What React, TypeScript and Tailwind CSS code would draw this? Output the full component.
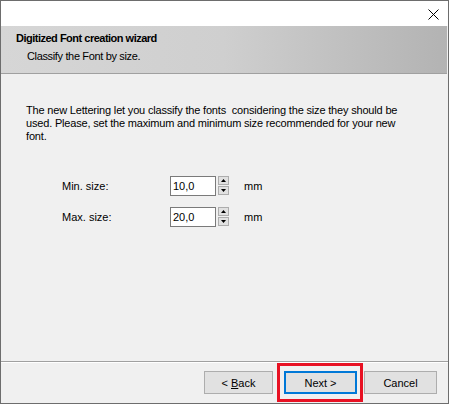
import React from 'react';

function Spinner() {
  return (
    <div className="ml-[2px] flex h-[20px] w-[11px] flex-col gap-[1px]">
      <div className="flex h-[9px] items-center justify-center border border-[#adadad] bg-[#e1e1e1]">
        <svg width="5" height="3" viewBox="0 0 5 3">
          <path d="M2.5 0 L5 3 L0 3 Z" fill="#000" />
        </svg>
      </div>
      <div className="flex h-[9px] items-center justify-center border border-[#adadad] bg-[#e1e1e1]">
        <svg width="5" height="3" viewBox="0 0 5 3">
          <path d="M0 0 L5 0 L2.5 3 Z" fill="#000" />
        </svg>
      </div>
    </div>
  );
}

function SizeRow({ label, value }: { label: string; value: string }) {
  return (
    <div className="flex items-center">
      <span className="w-[108px]">{label}</span>
      <div className="flex h-[20px] w-[46px] items-center border border-[#7a7a7a] bg-white pl-[2px] text-black">
        {value}
      </div>
      <Spinner />
      <span className="ml-[15px]">mm</span>
    </div>
  );
}

export default function App() {
  return (
    <div
      className="flex h-[404px] w-[449px] flex-col border border-[#6d6d6d] bg-[#f0f0f0] text-[11px] leading-[14px] text-black"
      style={{ fontFamily: '"Liberation Sans", Arial, sans-serif' }}
    >
      <div className="flex h-[25px] shrink-0 justify-end bg-white pr-[9px] pt-[8px]">
        <svg width="11" height="11" viewBox="0 0 11 11">
          <path d="M0.5 0.5 L10.5 10.5 M10.5 0.5 L0.5 10.5" stroke="#000" strokeWidth="1" />
        </svg>
      </div>
      <div className="mr-[1px] flex h-[48px] shrink-0 flex-col border-b border-[#a0a0a0] bg-gradient-to-r from-[#d6d6d6] via-[#cfcfcf] to-[#b3b3b3] pl-[15px] pt-[5px]">
        <div className="font-bold tracking-[-0.5px]">Digitized Font creation wizard</div>
        <div className="ml-[11px] mt-[4px] tracking-[-0.35px]">Classify the Font by size.</div>
      </div>
      <div className="flex flex-1 flex-col pl-[25px] pt-[30px]">
        <p className="w-[390px] leading-[13px] tracking-[-0.18px]">
          The new Lettering let you classify the fonts&nbsp; considering the size they should be used. Please, set the
          maximum and minimum size recommended for your new font.
        </p>
        <div className="ml-[36px] mt-[33px] flex flex-col gap-[11px]">
          <SizeRow label="Min. size:" value="10,0" />
          <SizeRow label="Max. size:" value="20,0" />
        </div>
      </div>
      <div className="h-[2px] shrink-0 border-t border-[#a0a0a0] bg-white" />
      <div className="flex h-[40px] shrink-0 items-start pl-[203px] pt-[8px]">
        <button className="h-[23px] w-[69px] border border-[#adadad] bg-[#e1e1e1]">
          &lt; <span className="underline">B</span>ack
        </button>
        <div className="ml-[4px] -mt-[8px] border-[3px] border-[#e81123] py-[5px] pl-[4px] pr-[3px]">
          <button className="block h-[23px] w-[73px] border-2 border-[#0078d7] bg-[#e1e1e1]">Next &gt;</button>
        </div>
        <button className="ml-[1px] h-[23px] w-[73px] border border-[#adadad] bg-[#e1e1e1]">Cancel</button>
      </div>
    </div>
  );
}
